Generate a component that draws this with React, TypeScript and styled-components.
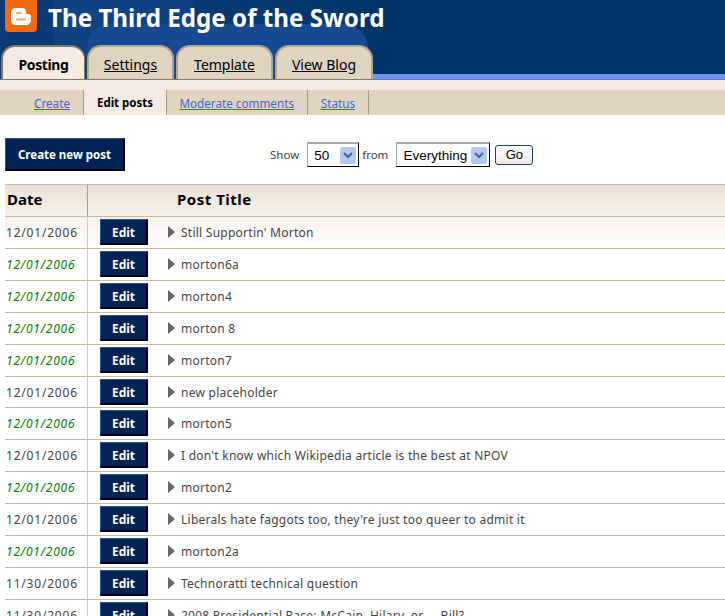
import React from "react";
import styled, { createGlobalStyle } from "styled-components";

const GlobalStyle = createGlobalStyle`
  html, body { margin: 0; padding: 0; background: #fff; overflow: hidden; }
  body { font-family: "Noto Sans", "Liberation Sans", sans-serif; color: #333; }
`;

const Page = styled.div`
  width: 725px;
  height: 616px;
  overflow: hidden;
`;

const Header = styled.header`
  position: relative;
  height: 79px;
  background: linear-gradient(90deg, #0a3b78 0, #063870 270px, #003366 400px);
  overflow: hidden;
  border-bottom: 1px solid #8a7560;
  box-sizing: content-box;
`;

const Glow = styled.div<{ $light?: boolean }>`
  position: absolute;
  left: ${(p) => (p.$light ? "87px" : "53px")};
  top: ${(p) => (p.$light ? "24px" : "-20px")};
  width: ${(p) => (p.$light ? "281px" : "140px")};
  height: 100px;
  border-radius: 24px;
  background: ${(p) => (p.$light ? "#164a90" : "#0f4282")};
`;

const Strip = styled.div`
  position: absolute;
  left: 373px;
  right: 0;
  bottom: 0;
  height: 5px;
  background: #6699ff;
`;

const Brand = styled.div`
  position: relative;
  display: flex;
  align-items: flex-start;
  gap: 11px;
  padding-left: 5px;
  height: 45px;
`;

const Logo = styled.svg`
  width: 32px;
  height: 32px;
  flex: none;
`;

const Title = styled.h1`
  margin: 0;
  font-size: 24.2px;
  line-height: 36px;
  font-weight: 700;
  color: #fff;
  white-space: nowrap;
`;

const Tabs = styled.nav`
  position: relative;
  display: flex;
  gap: 2px;
  padding-left: 1px;
  height: 34px;
  align-items: flex-end;
`;

const Tab = styled.a<{ $active?: boolean; $w: number }>`
  box-sizing: border-box;
  width: ${(p) => p.$w}px;
  height: 34px;
  display: flex;
  align-items: center;
  justify-content: center;
  padding-top: 3px;
  border: 2px solid ${(p) => (p.$active ? "#8a7560" : "#b3a48d")};
  border-bottom: 0;
  border-right-width: ${(p) => (p.$active ? 1 : 2)}px;
  border-radius: 14px 14px 0 0;
  background: ${(p) => (p.$active ? "#f5ebe2" : "#e0d4c0")};
  color: #000;
  font-size: 14px;
  letter-spacing: ${(p) => (p.$active ? "-0.4px" : "0")};
  font-weight: ${(p) => (p.$active ? 700 : 400)};
  text-decoration: ${(p) => (p.$active ? "none" : "underline")};
`;

const Cream = styled.div`
  height: 10px;
  background: #f5ebe2;
`;

const SubNav = styled.nav`
  display: flex;
  height: 25px;
  background: #e0d4c0;
`;

const SubItem = styled.a<{ $active?: boolean; $w: number }>`
  box-sizing: border-box;
  width: ${(p) => p.$w}px;
  display: flex;
  align-items: center;
  justify-content: ${(p) => (p.$active ? "center" : "flex-end")};
  padding-right: ${(p) => (p.$active ? 0 : 13)}px;
  border-right: 1px solid #a89a84;
  background: ${(p) => (p.$active ? "#f5ebe2" : "transparent")};
  color: ${(p) => (p.$active ? "#000" : "#3d66cc")};
  font-size: ${(p) => (p.$active ? 11.5 : 11.7)}px;
  font-weight: ${(p) => (p.$active ? 700 : 400)};
  text-decoration: ${(p) => (p.$active ? "none" : "underline")};
`;

const Toolbar = styled.div`
  display: flex;
  align-items: center;
  height: 33px;
  margin-top: 23px;
  padding-left: 5px;
`;

const NavyButton = styled.button<{ $w: number; $h: number }>`
  box-sizing: border-box;
  width: ${(p) => p.$w}px;
  height: ${(p) => p.$h}px;
  padding: 0;
  border: 0;
  border-top: 1px solid #1f5a96;
  border-left: 1px solid #1f5a96;
  border-right: 2px solid #000;
  border-bottom: 2px solid #000;
  background: #002255;
  color: #fff;
  font-family: inherit;
  font-weight: 700;
  font-size: 11.5px;
`;

const EditButton = styled(NavyButton)`
  padding-top: 2px;
  font-size: 12px;
`;

const Filter = styled.div`
  display: flex;
  align-items: center;
  margin-left: 145px;
  font-size: 11.5px;
  color: #444;
`;

const Select = styled.div<{ $w: number }>`
  box-sizing: border-box;
  width: ${(p) => p.$w}px;
  height: 25px;
  margin: 0 3px 0 8px;
  display: flex;
  align-items: center;
  justify-content: space-between;
  padding: 0 2px 0 6px;
  border: 1px solid #000;
  border-top: 2px solid #a8a8a8;
  border-left: 1px solid #a8a8a8;
  font-family: "Liberation Sans", sans-serif;
  font-size: 13.5px;
  color: #000;
`;

const Chevron = styled.span`
  width: 16px;
  height: 17px;
  display: flex;
  align-items: center;
  justify-content: center;
  border-radius: 2px;
  background: #b4c8f5;
`;

const GoButton = styled.button`
  box-sizing: border-box;
  width: 38px;
  height: 20px;
  margin-left: 2px;
  padding: 0;
  border: 1px solid #12426e;
  border-radius: 3px;
  background: linear-gradient(#ffffff, #ece9df);
  font-family: "Liberation Sans", sans-serif;
  font-size: 13px;
  color: #000;
`;

const Table = styled.div`
  margin: 13px 0 0 5px;
`;

const HeadRow = styled.div`
  box-sizing: border-box;
  display: flex;
  height: 33px;
  border-top: 1px solid #c8b8a4;
  border-bottom: 1px solid #c8b8a4;
  background: linear-gradient(#ebe1d4, #f6f1ea);
  color: #000;
  font-size: 15px;
  font-weight: 700;
`;

const HeadDate = styled.div`
  box-sizing: border-box;
  width: 83px;
  padding-left: 2px;
  line-height: 29px;
  border-right: 1px solid #a8a090;
`;

const HeadTitle = styled.div`
  padding-left: 89px;
  line-height: 29px;
  letter-spacing: 0.5px;
`;

// rows in the original table come out a hair under 32px, so the text drifts up by one further down
const Row = styled.div<{ $first?: boolean }>`
  box-sizing: border-box;
  display: flex;
  height: 31.92px;
  border-bottom: 1px solid #c8b8a4;
  background: ${(p) => (p.$first ? "linear-gradient(#f6f1ea, #ffffff)" : "#fff")};
  font-size: 12px;
`;

const DateCell = styled.div<{ $draft: boolean }>`
  box-sizing: border-box;
  width: 83px;
  padding-left: 1px;
  line-height: 31px;
  letter-spacing: 0.8px;
  border-right: 1px solid #c8c8c8;
  color: ${(p) => (p.$draft ? "#008000" : "#444")};
  font-style: ${(p) => (p.$draft ? "italic" : "normal")};
`;

const EditCell = styled.div`
  display: flex;
  padding: 2px 0 0 12px;
`;

const Arrow = styled.span`
  width: 0;
  height: 0;
  margin: 9px 6px 0 20px;
  border-left: 7px solid #666;
  border-top: 6px solid transparent;
  border-bottom: 6px solid transparent;
`;

const PostTitle = styled.div`
  line-height: 31px;
  letter-spacing: 0.25px;
  color: #444;
  white-space: nowrap;
`;

const posts = [
  { date: "12/01/2006", title: "Still Supportin' Morton", draft: false },
  { date: "12/01/2006", title: "morton6a", draft: true },
  { date: "12/01/2006", title: "morton4", draft: true },
  { date: "12/01/2006", title: "morton 8", draft: true },
  { date: "12/01/2006", title: "morton7", draft: true },
  { date: "12/01/2006", title: "new placeholder", draft: false },
  { date: "12/01/2006", title: "morton5", draft: true },
  { date: "12/01/2006", title: "I don't know which Wikipedia article is the best at NPOV", draft: false },
  { date: "12/01/2006", title: "morton2", draft: true },
  { date: "12/01/2006", title: "Liberals hate faggots too, they're just too queer to admit it", draft: false },
  { date: "12/01/2006", title: "morton2a", draft: true },
  { date: "11/30/2006", title: "Technoratti technical question", draft: false },
  { date: "11/30/2006", title: "2008 Presidential Race: McCain, Hilary, or ... Bill?", draft: false },
];

const tabs = [
  { label: "Posting", w: 84, active: true },
  { label: "Settings", w: 87 },
  { label: "Template", w: 97 },
  { label: "View Blog", w: 98 },
];

const subItems = [
  { label: "Create", w: 84 },
  { label: "Edit posts", w: 83, active: true },
  { label: "Moderate comments", w: 141 },
  { label: "Status", w: 61 },
];

const Down = () => (
  <svg width="10" height="7" viewBox="0 0 10 7">
    <path d="M1 1l4 4 4-4" fill="none" stroke="#4d6185" strokeWidth="2" />
  </svg>
);

export default function App() {
  return (
    <Page>
      <GlobalStyle />
      <Header>
        <Glow />
        <Glow $light />
        <Strip />
        <Brand>
          <Logo viewBox="0 0 32 32">
            <rect x="0" y="-4" width="32" height="36" rx="4" fill="#f26a0d" />
            <path d="M11 8h6c3 0 4 2 4 4v1c0 1 1 1 2 1 2 0 3 1 3 3v3c0 3-2 5-5 5H11c-3 0-5-2-5-5v-7c0-3 2-5 5-5z" fill="#fff" />
            <rect x="11" y="12" width="6" height="2" rx="1" fill="#f5a86a" />
            <rect x="11" y="18.5" width="10" height="2" rx="1" fill="#f5a86a" />
          </Logo>
          <Title>The Third Edge of the Sword</Title>
        </Brand>
        <Tabs>
          {tabs.map((t) => (
            <Tab key={t.label} $w={t.w} $active={t.active}>
              {t.label}
            </Tab>
          ))}
        </Tabs>
      </Header>
      <Cream />
      <SubNav>
        {subItems.map((s) => (
          <SubItem key={s.label} $w={s.w} $active={s.active}>
            {s.label}
          </SubItem>
        ))}
      </SubNav>
      <Toolbar>
        <NavyButton $w={120} $h={33}>Create new post</NavyButton>
        <Filter>
          Show
          <Select $w={52}>50<Chevron><Down /></Chevron></Select>
          from
          <Select $w={94}>Everything<Chevron><Down /></Chevron></Select>
          <GoButton>Go</GoButton>
        </Filter>
      </Toolbar>
      <Table>
        <HeadRow>
          <HeadDate>Date</HeadDate>
          <HeadTitle>Post Title</HeadTitle>
        </HeadRow>
        {posts.map((p, i) => (
          <Row key={i} $first={i === 0}>
            <DateCell $draft={p.draft}>{p.date}</DateCell>
            <EditCell>
              <EditButton $w={48} $h={26}>Edit</EditButton>
            </EditCell>
            <Arrow />
            <PostTitle>{p.title}</PostTitle>
          </Row>
        ))}
      </Table>
    </Page>
  );
}
